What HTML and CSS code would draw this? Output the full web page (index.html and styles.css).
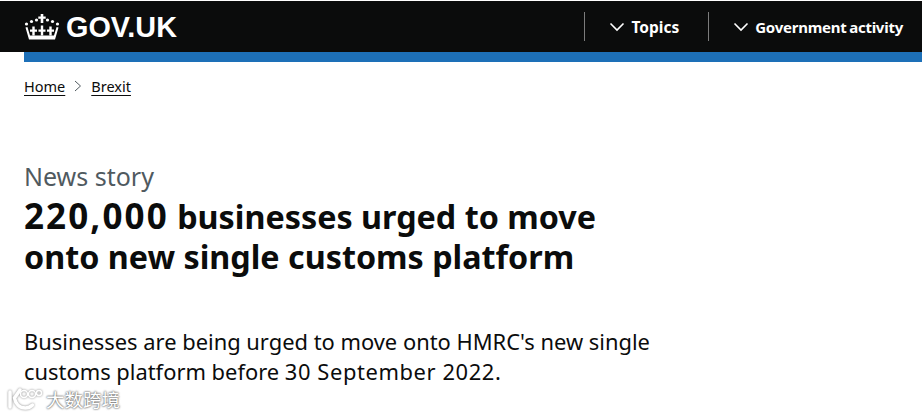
FILE: index.html
```html
<!DOCTYPE html>
<html lang="en">
<head>
<meta charset="utf-8">
<title>220,000 businesses urged to move onto new single customs platform</title>
<link rel="stylesheet" href="styles.css">
</head>
<body>
<header class="topbar">
  <a class="brand" href="#">
    <svg class="crown" viewBox="0 0 36 26" width="36" height="26" aria-hidden="true">
      <g fill="#fff">
        <circle cx="2.500" cy="10" r="1.600"/><circle cx="7.500" cy="7.500" r="1.600"/><circle cx="12.500" cy="6" r="1.600"/>
        <circle cx="23.500" cy="6" r="1.600"/><circle cx="28.500" cy="7.500" r="1.600"/><circle cx="33.500" cy="10" r="1.600"/>
        <path d="M16.700 0h2.600v2.400h2.400v2.400h-2.400v4.200h-2.600V4.800h-2.400V2.400h2.400z"/>
        <path d="M8.300 12.500h2.400v3h2.300v2.200h-2.300v3.800H8.300v-3.800H6v-2.200h2.300z"/>
        <path d="M16.800 11.500h2.400v4h2.300v2.200h-2.300v3.800h-2.400v-3.800h-2.300v-2.200h2.300z"/>
        <path d="M25.300 12.500h2.400v3H30v2.200h-2.300v3.800h-2.400v-3.800H23v-2.200h2.300z"/>
        <path d="M1.500 13.500 3.400 13 6 21.500H30L32.600 13l1.900.5L31 25.500H5z"/>
      </g>
    </svg>
    <span class="wordmark">GOV.UK</span>
  </a>
  <nav class="menu">
    <a class="menu-item" href="#"><svg class="chev" viewBox="0 0 16 10" width="16" height="10"><path d="M1.500 1.500 8 8l6.500-6.500" fill="none" stroke="#fff" stroke-width="1.600"/></svg>Topics</a>
    <a class="menu-item menu-item-long" href="#"><svg class="chev" viewBox="0 0 16 10" width="16" height="10"><path d="M1.500 1.500 8 8l6.500-6.500" fill="none" stroke="#fff" stroke-width="1.600"/></svg>Government activity</a>
  </nav>
</header>
<div class="accent"></div>
<main class="content">
  <nav class="crumbs">
    <a href="#">Home</a>
    <svg class="crumb-sep" viewBox="0 0 8 12" width="8" height="12"><path d="M1 1l5.500 5L1 11" fill="none" stroke="#505a5f" stroke-width="1"/></svg>
    <a href="#">Brexit</a>
  </nav>
  <p class="kicker">News story</p>
  <h1 class="title"><span class="title-num">220,000</span> businesses urged to move onto new single customs platform</h1>
  <p class="lede">Businesses are being urged to move onto HMRC's new single customs platform before <span class="lede-date">30 September 2022.</span></p>
</main>
<div class="watermark">
  <svg viewBox="0 0 36 24" width="36" height="24" aria-hidden="true">
    <g fill="none" stroke="#fff" stroke-linecap="round">
      <path d="M3 5v15" stroke-width="3.500"/>
      <path d="M13 3 7.500 11c1 6 5 10 11 10 3 0 5-1 7-3" stroke-width="3.500"/>
      <circle cx="17" cy="7" r="3.500" stroke-width="1.500"/>
      <circle cx="25" cy="7" r="3.500" stroke-width="1.500"/>
      <circle cx="32" cy="6" r="2.500" stroke-width="1.500"/>
    </g>
  </svg>
  <span>大数跨境</span>
</div>
</body>
</html>
```
FILE: styles.css
```css
* { box-sizing: border-box; }
html, body { margin: 0; padding: 0; }
body {
  width: 922px;
  height: 417px;
  overflow: hidden;
  background: #fff;
  color: #0b0c0c;
  font-family: "Noto Sans", "Open Sans", Arial, sans-serif;
  position: relative;
  padding-top: 1px;
}
a { color: inherit; }
.topbar {
  height: 51px;
  background: #0b0c0c;
  display: flex;
  justify-content: space-between;
  align-items: center;
  padding-left: 24px;
  color: #fff;
}
.brand {
  display: flex;
  align-items: center;
  gap: 6px;
  text-decoration: none;
}
.wordmark {
  font-family: "Liberation Sans", Arial, sans-serif;
  font-weight: 700;
  font-size: 28.800px;
  line-height: 30px;
}
.menu { display: flex; height: 29px; }
.menu-item {
  display: flex;
  align-items: center;
  gap: 6px;
  border-left: 1px solid #7c7c7c;
  padding: 0 29px 0 24px;
  font-size: 15.500px;
  font-weight: 700;
  text-decoration: none;
}
.menu-item-long {
  padding-right: 19px;
  font-size: 15px;
  letter-spacing: -0.250px;
  word-spacing: -1px;
}
.accent { height: 10px; margin-left: 24px; background: #1d70b8; }
.content { padding: 0 24px; }
.crumbs {
  display: flex;
  align-items: center;
  gap: 9px;
  margin-top: 14px;
  height: 20px;
  font-size: 14.500px;
  line-height: 20px;
}
.crumbs a { text-underline-offset: 3px; }
.crumb-sep { flex: none; }
.kicker {
  margin: 64px 0 0;
  font-size: 25px;
  line-height: 32px;
  color: #505a5f;
}
.title {
  margin: 4px 0 0;
  width: 640px;
  font-size: 32.300px;
  line-height: 40px;
  font-weight: 700;
}
.title-num {
  font-size: 35px;
  line-height: 1;
  letter-spacing: 2.100px;
}
.lede {
  margin: 51px 0 0;
  width: 640px;
  font-size: 21.900px;
  line-height: 30px;
}
.lede-date { letter-spacing: 0.600px; }
.watermark {
  position: absolute;
  left: 7px;
  top: 387px;
  display: flex;
  align-items: center;
  gap: 3px;
  color: #fff;
  font-family: "Noto Sans CJK SC", sans-serif;
  font-size: 18.500px;
  line-height: 24px;
  text-shadow: 0 0 2px #666, 0 0 2px #666;
}
.watermark svg { filter: drop-shadow(0 0 1px #888); }
```
